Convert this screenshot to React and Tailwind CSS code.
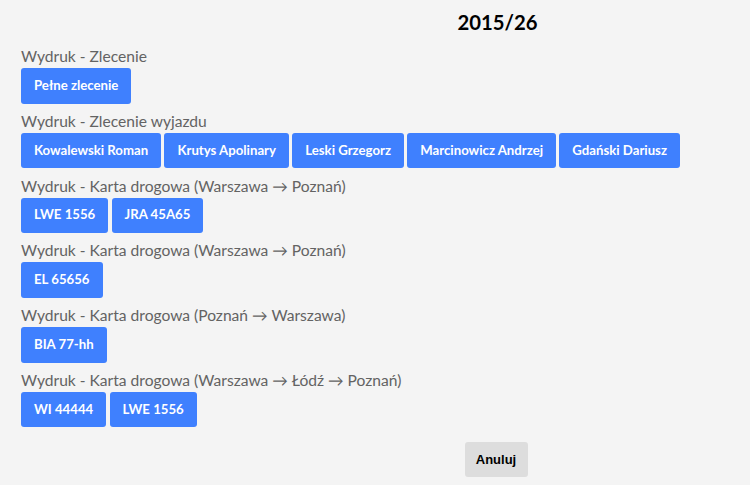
const groups = [
  { label: 'Wydruk - Zlecenie', items: ['Pełne zlecenie'] },
  {
    label: 'Wydruk - Zlecenie wyjazdu',
    items: ['Kowalewski Roman', 'Krutys Apolinary', 'Leski Grzegorz', 'Marcinowicz Andrzej', 'Gdański Dariusz'],
  },
  { label: 'Wydruk - Karta drogowa (Warszawa → Poznań)', items: ['LWE 1556', 'JRA 45A65'] },
  { label: 'Wydruk - Karta drogowa (Warszawa → Poznań)', items: ['EL 65656'] },
  { label: 'Wydruk - Karta drogowa (Poznań → Warszawa)', items: ['BIA 77-hh'] },
  { label: 'Wydruk - Karta drogowa (Warszawa → Łódź → Poznań)', items: ['WI 44444', 'LWE 1556'] },
]

export default function App() {
  return (
    <div className="w-[750px] h-[485px] overflow-hidden bg-[#f4f4f4] font-['Lato',sans-serif]">
      <div className="w-[992px]">
        <h1 className="pt-[8px] text-center text-[20.3px] leading-[28px] font-bold text-black">
          <span className="inline-block pl-[3px]">2015/26</span>
        </h1>

        <div className="mt-[8px] pl-[21px] flex flex-col gap-[5.3px]">
          {groups.map((g, i) => (
            <div key={i}>
              <div className="text-[15.6px] leading-[24px] text-[#636363]">{g.label}</div>
              <div className="flex gap-[3.3px]">
                {g.items.map((it, j) => (
                  <button
                    key={j}
                    className="h-[35.5px] px-[13px] rounded-[3px] bg-[#3f80fe] text-white text-[13.2px] font-bold whitespace-nowrap"
                  >
                    {it}
                  </button>
                ))}
              </div>
            </div>
          ))}
        </div>

        <div className="mt-[14.5px] flex justify-center">
          <button className="h-[35px] w-[63px] rounded-[3px] bg-[#dddddd] text-black text-[13px] font-bold font-['Liberation_Sans',sans-serif]">
            Anuluj
          </button>
        </div>
      </div>
    </div>
  )
}
